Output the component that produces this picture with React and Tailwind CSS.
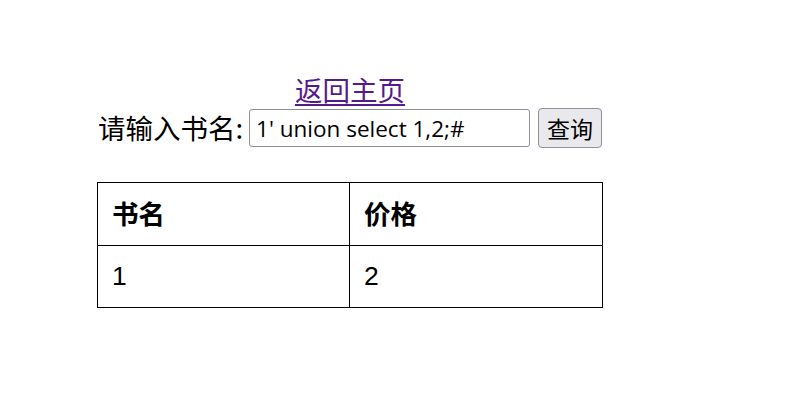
export default function App() {
  return (
    <div className="w-[799px] h-[400px] bg-white">
      <div className="ml-[97px] w-[506px] pt-[72px] flex flex-col items-center">
        <a
          href="#"
          className="text-[27.5px] leading-[35px] text-[#551a8b] underline underline-offset-[3px]"
          style={{ fontFamily: '"Noto Sans CJK SC", sans-serif' }}
        >
          返回主页
        </a>
        <div
          className="flex items-center h-[40px] mt-[1px]"
          style={{ fontFamily: '"Noto Sans CJK SC", sans-serif' }}
        >
          <span className="text-[27.5px] text-black">请输入书名:</span>
          <input
            readOnly
            value="1' union select 1,2;#"
            className="ml-[6px] w-[281px] h-[38px] border border-[#8f8f9d] rounded-[3px] px-[6px] text-[22.5px] text-black outline-none"
            style={{ fontFamily: '"Open Sans", sans-serif' }}
          />
          <button className="ml-[8px] w-[64px] h-[40px] border border-[#8f8f9d] rounded-[4px] bg-[#e9e9ed] text-[23px] text-black">
            查询
          </button>
        </div>
        <table
          className="mt-[34px] w-[506px] border-collapse table-fixed text-[26.5px] text-black"
          style={{ fontFamily: '"Liberation Sans", "Noto Sans CJK SC", sans-serif' }}
        >
          <thead>
            <tr className="h-[63px]">
              <th className="w-[252px] border border-black text-left font-bold pl-[14px] pt-[3px]">书名</th>
              <th className="border border-black text-left font-bold pl-[14px] pt-[3px]">价格</th>
            </tr>
          </thead>
          <tbody>
            <tr className="h-[62px]">
              <td className="border border-black pl-[14px]">1</td>
              <td className="border border-black pl-[14px]">2</td>
            </tr>
          </tbody>
        </table>
      </div>
    </div>
  );
}
